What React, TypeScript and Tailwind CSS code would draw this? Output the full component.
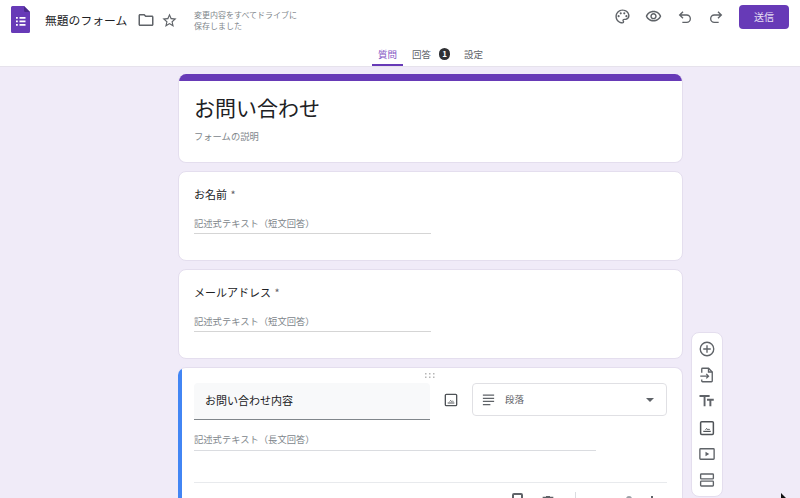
import React from "react";

const Image2 = ({ size = 16 }: { size?: number }) => (
  <svg width={size} height={size} viewBox="0 0 24 24" fill="none" stroke="#4f5357" strokeWidth="2">
    <rect x="3.500" y="3.500" width="17" height="17" rx="1.500" />
    <path d="M7 16.500h10" strokeWidth="1.600" />
    <path d="M10 14.500l1.500-2 1.500 2M13.500 14.500l1-1.300 1 1.300" strokeWidth="1.200" />
  </svg>
);

function ShortQuestion({ title }: { title: string }) {
  return (
    <section className="w-[505px] h-[90px] bg-white rounded-[8px] border border-[#e4deee] pl-[15px] pt-[13px]">
      <div className="text-[11px] leading-[18px] text-[#202124]">{title} <span className="text-[#5f6368] ml-[1px]">*</span></div>
      <div className="w-[237px] h-[20px] mt-[11px] border-b border-[#d5d5d5] text-[9.300px] leading-[18px] text-[#80868b]">記述式テキスト（短文回答）</div>
    </section>
  );
}

export default function App() {
  return (
    <div className="w-[800px] h-[498px] overflow-hidden relative bg-[#f0ebf8]" style={{ fontFamily: '"Noto Sans CJK JP", "Noto Sans", sans-serif' }}>
      <header className="h-[67px] bg-white border-b border-[#e6e2ec] flex flex-col">
        <div className="h-[43px] flex items-center pl-[11px] pr-[11px]">
          <svg width="19" height="27" viewBox="0 0 19 27" className="mt-[-4px]">
            <path d="M1.500 0H13l6 6v19.500a1.500 1.500 0 0 1-1.500 1.500h-16A1.500 1.500 0 0 1 0 25.500v-24A1.500 1.500 0 0 1 1.500 0z" fill="#673ab7" />
            <path d="M13 0l6 6h-4.500A1.500 1.500 0 0 1 13 4.500z" fill="#4a2a8a" />
            <path d="M5 11h1.800v1.800H5zm3.500 0h6v1.800h-6zM5 14.500h1.800v1.800H5zm3.500 0h6v1.800h-6zM5 18h1.800v1.800H5zm3.500 0h6v1.800h-6z" fill="#fff" />
          </svg>
          <span className="ml-[15px] text-[11.800px] text-[#202124] w-[82px] whitespace-nowrap mt-[-3px]">無題のフォーム</span>
          <svg width="18" height="18" viewBox="0 0 24 24" className="ml-[10px] text-[#5f6368] mt-[-3px]" fill="currentColor"><path d="M20 6h-8l-2-2H4c-1.100 0-2 .9-2 2v12c0 1.100.9 2 2 2h16c1.100 0 2-.9 2-2V8c0-1.100-.9-2-2-2zm0 12H4V6h5.170l2 2H20v10z" /></svg>
          <svg width="17" height="17" viewBox="0 0 24 24" className="ml-[6px] text-[#5f6368] mt-[-3px]" fill="currentColor"><path d="M22 9.240l-7.190-.62L12 2 9.190 8.630 2 9.240l5.460 4.730L5.820 21 12 17.270 18.180 21l-1.630-7.030L22 9.240zM12 15.400l-3.760 2.270 1-4.280-3.320-2.880 4.380-.38L12 6.100l1.710 4.040 4.380.38-3.320 2.880 1 4.280L12 15.400z" /></svg>
          <div className="ml-[16px] w-[112px] text-[8px] leading-[11px] text-[#80868b] mt-[-3px]">変更内容をすべてドライブに<br />保存しました</div>
          <div className="ml-auto flex items-center text-[#5f6368] mt-[-10px]">
            <svg width="17" height="17" viewBox="0 0 24 24" fill="currentColor"><path d="M12 22C6.490 22 2 17.510 2 12S6.490 2 12 2s10 4.040 10 9c0 3.310-2.690 6-6 6h-1.770c-.28 0-.5.220-.5.500 0 .12.050.23.130.33.410.47.640 1.060.640 1.670A2.500 2.500 0 0 1 12 22zm0-18c-4.410 0-8 3.590-8 8s3.590 8 8 8c.28 0 .5-.22.500-.5a.54.54 0 0 0-.14-.35c-.41-.46-.63-1.050-.63-1.650a2.500 2.500 0 0 1 2.500-2.500H16c2.210 0 4-1.790 4-4 0-3.860-3.590-7-8-7z" /><circle cx="6.500" cy="11.500" r="1.500" /><circle cx="9.500" cy="7.500" r="1.500" /><circle cx="14.500" cy="7.500" r="1.500" /><circle cx="17.500" cy="11.500" r="1.500" /></svg>
            <svg width="17" height="17" viewBox="0 0 24 24" fill="currentColor" className="ml-[14px]"><path d="M12 6a9.770 9.770 0 0 1 8.820 5.500C19.170 14.870 15.800 17 12 17s-7.170-2.130-8.820-5.500A9.770 9.770 0 0 1 12 6m0-2C7 4 2.730 7.110 1 11.500 2.730 15.890 7 19 12 19s9.270-3.110 11-7.500C21.270 7.110 17 4 12 4zm0 5a2.500 2.500 0 0 1 0 5 2.500 2.500 0 0 1 0-5m0-2c-2.480 0-4.500 2.020-4.500 4.500S9.520 16 12 16s4.500-2.020 4.500-4.500S14.480 7 12 7z" /></svg>
            <svg width="16" height="16" viewBox="0 0 24 24" fill="none" stroke="currentColor" strokeWidth="2" className="ml-[15px]"><path d="M9 14L4 9l5-5M4 9h10.500a5.500 5.500 0 0 1 0 11H8" /></svg>
            <svg width="16" height="16" viewBox="0 0 24 24" fill="none" stroke="currentColor" strokeWidth="2" className="ml-[15px]"><path d="M15 14l5-5-5-5M20 9H9.500a5.500 5.500 0 0 0 0 11H16" /></svg>
            <div className="ml-[15px] w-[50px] h-[24px] rounded-[4px] bg-[#673ab7] text-[#e8e0f5] text-[10px] flex items-center justify-center">送信</div>
          </div>
        </div>
        <nav className="flex items-start h-[23px] pl-[372px] text-[9.500px] text-[#5f6368]">
          <div className="w-[31px] h-[23px] border-b-2 border-[#673ab7] text-[#8455c4] text-center leading-[22px]">質問</div>
          <div className="ml-[9px] leading-[22px]">回答</div>
          <div className="ml-[8px] mt-[5px] w-[11px] h-[12px] rounded-full bg-[#2f3033] text-white text-[8px] font-bold leading-[12px] text-center">1</div>
          <div className="ml-[14px] leading-[22px]">設定</div>
        </nav>
      </header>

      <main className="flex flex-col items-start pl-[178px] pt-[7px] gap-[8px]">
        <section className="w-[505px] h-[89px] bg-white rounded-[8px] border border-t-0 border-[#e4deee] overflow-hidden">
          <div className="h-[7px] bg-[#673ab7]" />
          <div className="pl-[15px]">
            <div className="text-[21px] leading-[30px] mt-[11px] text-[#202124]">お問い合わせ</div>
            <div className="text-[9.300px] leading-[14px] mt-[7px] text-[#80868b]">フォームの説明</div>
          </div>
        </section>
        <ShortQuestion title="お名前" />
        <ShortQuestion title="メールアドレス" />
        <section className="w-[505px] h-[140px] shrink-0 bg-white rounded-[8px] border border-[#e4deee] border-l-0 overflow-hidden flex">
          <div className="w-[4px] bg-[#4285f4] shrink-0" />
          <div className="flex-1 pl-[12px] pr-[16px]">
            <div className="h-[15px] flex items-center justify-center">
              <svg width="12" height="6" viewBox="0 0 12 6" fill="#b5b5b5" className="ml-[-1px] mt-[1px]">
                <rect x="1" y="0" width="1.500" height="1.500" /><rect x="5" y="0" width="1.500" height="1.500" /><rect x="9" y="0" width="1.500" height="1.500" />
                <rect x="1" y="3.500" width="1.500" height="1.500" /><rect x="5" y="3.500" width="1.500" height="1.500" /><rect x="9" y="3.500" width="1.500" height="1.500" />
              </svg>
            </div>
            <div className="flex items-start">
              <div className="w-[236px] h-[37px] bg-[#f8f9fa] border-b border-[#80868b] rounded-t-[4px] pl-[11px] text-[11px] leading-[35px] text-[#202124]">お問い合わせ内容</div>
              <div className="w-[42px] h-[33px] flex items-center justify-center"><Image2 /></div>
              <div className="w-[195px] h-[33px] rounded-[4px] border border-[#e0e0e4] flex items-center pl-[8px] pr-[12px] text-[#5f6368]">
                <svg width="15" height="15" viewBox="0 0 24 24" fill="currentColor"><path d="M3 4h18v2H3zm0 5h18v2H3zm0 5h18v2H3zm0 5h12v2H3z" /></svg>
                <span className="ml-[9px] text-[9.500px]">段落</span>
                <svg width="8" height="4" viewBox="0 0 8 4" fill="currentColor" className="ml-auto"><path d="M0 0h8L4 4z" /></svg>
              </div>
            </div>
            <div className="w-[402px] h-[23px] mt-[8px] border-b border-[#dadce0] text-[9.300px] leading-[23px] text-[#80868b]">記述式テキスト（長文回答）</div>
            <div className="h-[32px] border-b border-[#e8eaed]" />
            <div className="flex items-start text-[#5f6368] pt-[10px]">
              <div className="ml-[318px] w-[11px] h-[12px] rounded-[2px] border-2 border-[#5f6368]" />
              <svg width="16" height="16" viewBox="0 0 24 24" fill="currentColor" className="ml-[17px] mt-[1px]"><path d="M15 4V3H9v1H4v2h1v13c0 1.100.9 2 2 2h10c1.100 0 2-.9 2-2V6h1V4h-5z" /></svg>
              <div className="ml-[19px] mt-[-1px] w-px h-[12px] bg-[#dadce0]" />
              <div className="ml-[50px] mt-[3px] w-[6px] h-[6px] rounded-full bg-[#9aa0a6]" />
              <div className="ml-[19px] mt-[3px] w-[2px] h-[6px] bg-[#5f6368]" />
            </div>
          </div>
        </section>
      </main>

      <aside className="absolute left-[691px] top-[332px] w-[32px] h-[165px] bg-white rounded-[8px] border border-[#e4deee] flex flex-col items-center text-[#5f6368] pt-[7px] gap-[8.200px]">
        <svg width="18" height="18" viewBox="0 0 24 24" fill="none" stroke="currentColor" strokeWidth="1.800"><circle cx="12" cy="12" r="9" /><path d="M12 7v10M7 12h10" /></svg>
        <svg width="18" height="18" viewBox="0 0 24 24" fill="none" stroke="currentColor" strokeWidth="1.800"><path d="M5 9V4a1 1 0 0 1 1-1h8l5 5v12a1 1 0 0 1-1 1H6a1 1 0 0 1-1-1v-2" /><path d="M14 3v5h5" /><path d="M3 13.500h11M11 10.500l3 3-3 3" /></svg>
        <svg width="18" height="18" viewBox="0 0 24 24" fill="currentColor"><path d="M2 4v2.500h5.500V19H10V6.500h5.500V4zm19 5h-9v2.500h3.200V19h2.600v-7.500H21z" /></svg>
        <Image2 size={18} />
        <svg width="18" height="18" viewBox="0 0 24 24" fill="none" stroke="currentColor" strokeWidth="1.800"><rect x="2.500" y="5" width="19" height="14" rx="1" /><path d="M10 9l5 3-5 3z" fill="currentColor" stroke="none" /></svg>
        <svg width="18" height="18" viewBox="0 0 24 24" fill="none" stroke="currentColor" strokeWidth="1.800"><rect x="3.500" y="4" width="17" height="6.500" rx="1" /><rect x="3.500" y="13.500" width="17" height="6.500" rx="1" /></svg>
      </aside>

      <svg width="8" height="8" viewBox="0 0 8 8" className="absolute left-[780px] top-[493px]"><path d="M1 0v8l2-2h4z" fill="#111" /></svg>
    </div>
  );
}
